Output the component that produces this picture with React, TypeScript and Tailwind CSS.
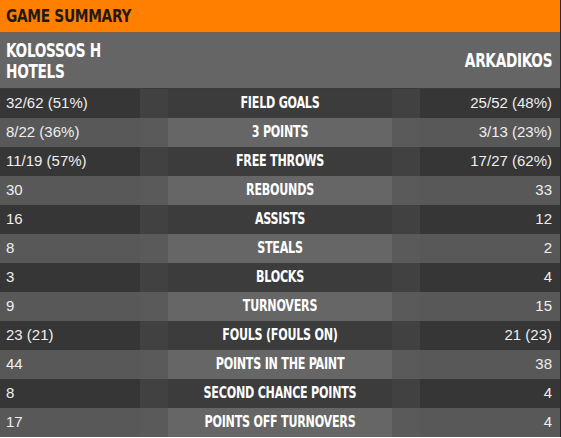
import React from 'react'

interface StatRow {
  label: string
  home: string
  away: string
}

const rows: StatRow[] = [
  { label: 'FIELD GOALS', home: '32/62 (51%)', away: '25/52 (48%)' },
  { label: '3 POINTS', home: '8/22 (36%)', away: '3/13 (23%)' },
  { label: 'FREE THROWS', home: '11/19 (57%)', away: '17/27 (62%)' },
  { label: 'REBOUNDS', home: '30', away: '33' },
  { label: 'ASSISTS', home: '16', away: '12' },
  { label: 'STEALS', home: '8', away: '2' },
  { label: 'BLOCKS', home: '3', away: '4' },
  { label: 'TURNOVERS', home: '9', away: '15' },
  { label: 'FOULS (FOULS ON)', home: '23 (21)', away: '21 (23)' },
  { label: 'POINTS IN THE PAINT', home: '44', away: '38' },
  { label: 'SECOND CHANCE POINTS', home: '8', away: '4' },
  { label: 'POINTS OFF TURNOVERS', home: '17', away: '4' },
]

// no narrow headline face installed, so squeeze DejaVu bold horizontally
const display =
  "inline-block font-['DejaVu_Sans_Condensed',_'DejaVu_Sans',_sans-serif] font-bold uppercase tracking-[-0.02em]"
const body = "font-['Liberation_Sans',_Arial,_sans-serif] text-[15px] text-[#eeeeee]"

export default function App() {
  return (
    <div className="w-[561px] border-r border-[#2a2a2a] bg-[#2f2f2f]">
      <div className="flex h-[33px] items-center border-b border-[#7a6148] bg-[#ff7f00] px-[6px]">
        <h1 className={`${display} origin-left scale-x-[0.85] text-[18px] leading-none text-[#1e1a16]`}>
          Game Summary
        </h1>
      </div>
      <div className="flex h-[56px] items-center justify-between border-b border-[#3a3a3a] bg-[#656565] px-[6px] pr-[8px]">
        <span className={`${display} w-[125px] origin-left scale-x-[0.8] text-[19px] leading-[21px] text-white`}>
          Kolossos H Hotels
        </span>
        <span className={`${display} origin-right scale-x-[0.8] text-[19px] leading-[21px] text-white`}>
          Arkadikos
        </span>
      </div>
      {rows.map((row, i) => {
        const dark = i % 2 === 0
        return (
          <div
            key={row.label}
            className={`grid h-[29px] grid-cols-[140px_28px_224px_28px_1fr] ${
              dark ? 'bg-[#363636]' : 'bg-[#585858]'
            }`}
          >
            <div className={`${body} flex items-center pl-[6px]`}>{row.home}</div>
            <div className={dark ? 'bg-[#414141]' : 'bg-[#5a5a5a]'} />
            <div
              className={`flex items-center justify-center ${dark ? 'bg-[#3c3c3c]' : 'bg-[#666666]'}`}
            >
              <span
                className={`${display} w-[280px] shrink-0 scale-x-[0.8] text-center text-[15.5px] text-white`}
              >
                {row.label}
              </span>
            </div>
            <div className={dark ? 'bg-[#414141]' : 'bg-[#5a5a5a]'} />
            <div className={`${body} flex items-center justify-end pr-[8px]`}>{row.away}</div>
          </div>
        )
      })}
    </div>
  )
}
